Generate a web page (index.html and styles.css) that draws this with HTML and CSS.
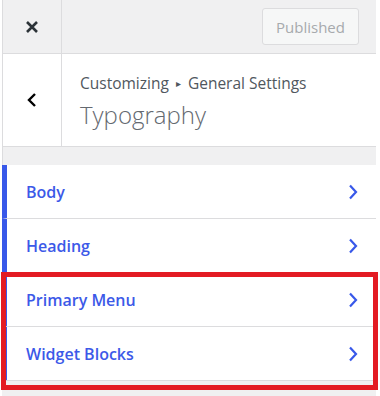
FILE: index.html
```html
<!DOCTYPE html>
<html lang="en">
<head>
    <meta charset="UTF-8">
    <meta name="viewport" content="width=device-width, initial-scale=1.0">
    <title>Customizer - Typography</title>
    <link rel="stylesheet" href="styles.css">
</head>
<body>
<div class="panel">
    <!-- Barra superior -->
    <header class="top-bar">
        <button class="close-btn" aria-label="Close">
            <svg width="14" height="14" viewBox="0 0 14 14">
                <path d="M2 2 L12 12 M12 2 L2 12" stroke="#2c3338" stroke-width="2.6" fill="none"/>
            </svg>
        </button>
        <div class="top-actions">
            <button class="publish-btn" disabled>Published</button>
        </div>
    </header>

    <!-- Titulo da secao -->
    <div class="section-head">
        <button class="back-btn" aria-label="Back">
            <svg width="12" height="16" viewBox="0 0 12 16">
                <path d="M9 2 L3 8 L9 14" stroke="#000" stroke-width="2.4" fill="none"/>
            </svg>
        </button>
        <div class="section-title">
            <span class="crumbs">Customizing <span class="crumb-sep">&#9656;</span> General Settings</span>
            <h2>Typography</h2>
        </div>
    </div>

    <div class="spacer"></div>

    <!-- Lista de controles -->
    <ul class="controls">
        <li class="control"><span>Body</span><svg class="chev" width="10" height="16" viewBox="0 0 10 16"><path d="M2 1.5 L8 8 L2 14.5" stroke="#3858e9" stroke-width="2.2" fill="none"/></svg></li>
        <li class="control"><span>Heading</span><svg class="chev" width="10" height="16" viewBox="0 0 10 16"><path d="M2 1.5 L8 8 L2 14.5" stroke="#3858e9" stroke-width="2.2" fill="none"/></svg></li>
        <li class="control"><span>Primary Menu</span><svg class="chev" width="10" height="16" viewBox="0 0 10 16"><path d="M2 1.5 L8 8 L2 14.5" stroke="#3858e9" stroke-width="2.2" fill="none"/></svg></li>
        <li class="control"><span>Widget Blocks</span><svg class="chev" width="10" height="16" viewBox="0 0 10 16"><path d="M2 1.5 L8 8 L2 14.5" stroke="#3858e9" stroke-width="2.2" fill="none"/></svg></li>
    </ul>

    <!-- Destaque -->
    <div class="highlight"></div>
</div>
</body>
</html>
```

FILE: styles.css
```css
/* Reset basico */
* {
    margin: 0;
    padding: 0;
    box-sizing: border-box;
}

body {
    background: #fff;
    font-family: "Open Sans", "Noto Sans", sans-serif;
    color: #50575e;
}

.panel {
    position: relative;
    margin-left: 2px;
    width: 374px;
    height: 396px;
    background: #f0f0f1;
}

button {
    background: none;
    border: none;
    font-family: inherit;
}

/* Barra superior */
.top-bar {
    display: flex;
    height: 54px;
    background: #f0f0f1;
    border-left: 1px solid #dcdcde;
    border-bottom: 1px solid #dcdcde;
}

.close-btn {
    width: 59px;
    border-right: 1px solid #dcdcde;
    display: flex;
    align-items: center;
    justify-content: center;
}

.top-actions {
    flex: 1;
    display: flex;
    justify-content: flex-end;
    padding: 8px 17px 0 0;
}

.publish-btn {
    width: 97px;
    height: 37px;
    background: #f6f7f7;
    border: 1px solid #dcdcde;
    border-radius: 3px;
    color: #a7aaad;
    font-size: 15px;
}

/* Titulo */
.section-head {
    display: flex;
    height: 93px;
    background: #fff;
    border-left: 1px solid #dcdcde;
    border-bottom: 1px solid #dcdcde;
}

.back-btn {
    width: 59px;
    border-right: 1px solid #dcdcde;
    display: flex;
    align-items: center;
    justify-content: center;
}

.section-title {
    padding: 18px 0 0 18px;
}

.crumbs {
    display: block;
    font-size: 15.5px;
    line-height: 22px;
    color: #50575e;
}

.crumb-sep {
    font-size: 10px;
    vertical-align: 2px;
    margin: 0 3px;
}

.section-title h2 {
    margin-top: 5px;
    font-size: 24px;
    font-weight: 300;
    line-height: 32px;
    color: #646970;
}

.spacer {
    height: 18px;
    border-left: 1px solid #dcdcde;
}

/* Lista */
.controls {
    list-style: none;
    background: #fff;
}

.control {
    display: flex;
    align-items: center;
    justify-content: space-between;
    height: 54px;
    padding: 0 18px 0 19px;
    border-left: 5px solid #3858e9;
    border-bottom: 1px solid #dcdcde;
    color: #3c59e8;
    font-size: 16px;
    font-weight: 600;
}

/* Caixa vermelha */
.highlight {
    position: absolute;
    left: -1px;
    top: 272px;
    width: 377px;
    height: 118px;
    border: 5px solid #e31b23;
}
```
